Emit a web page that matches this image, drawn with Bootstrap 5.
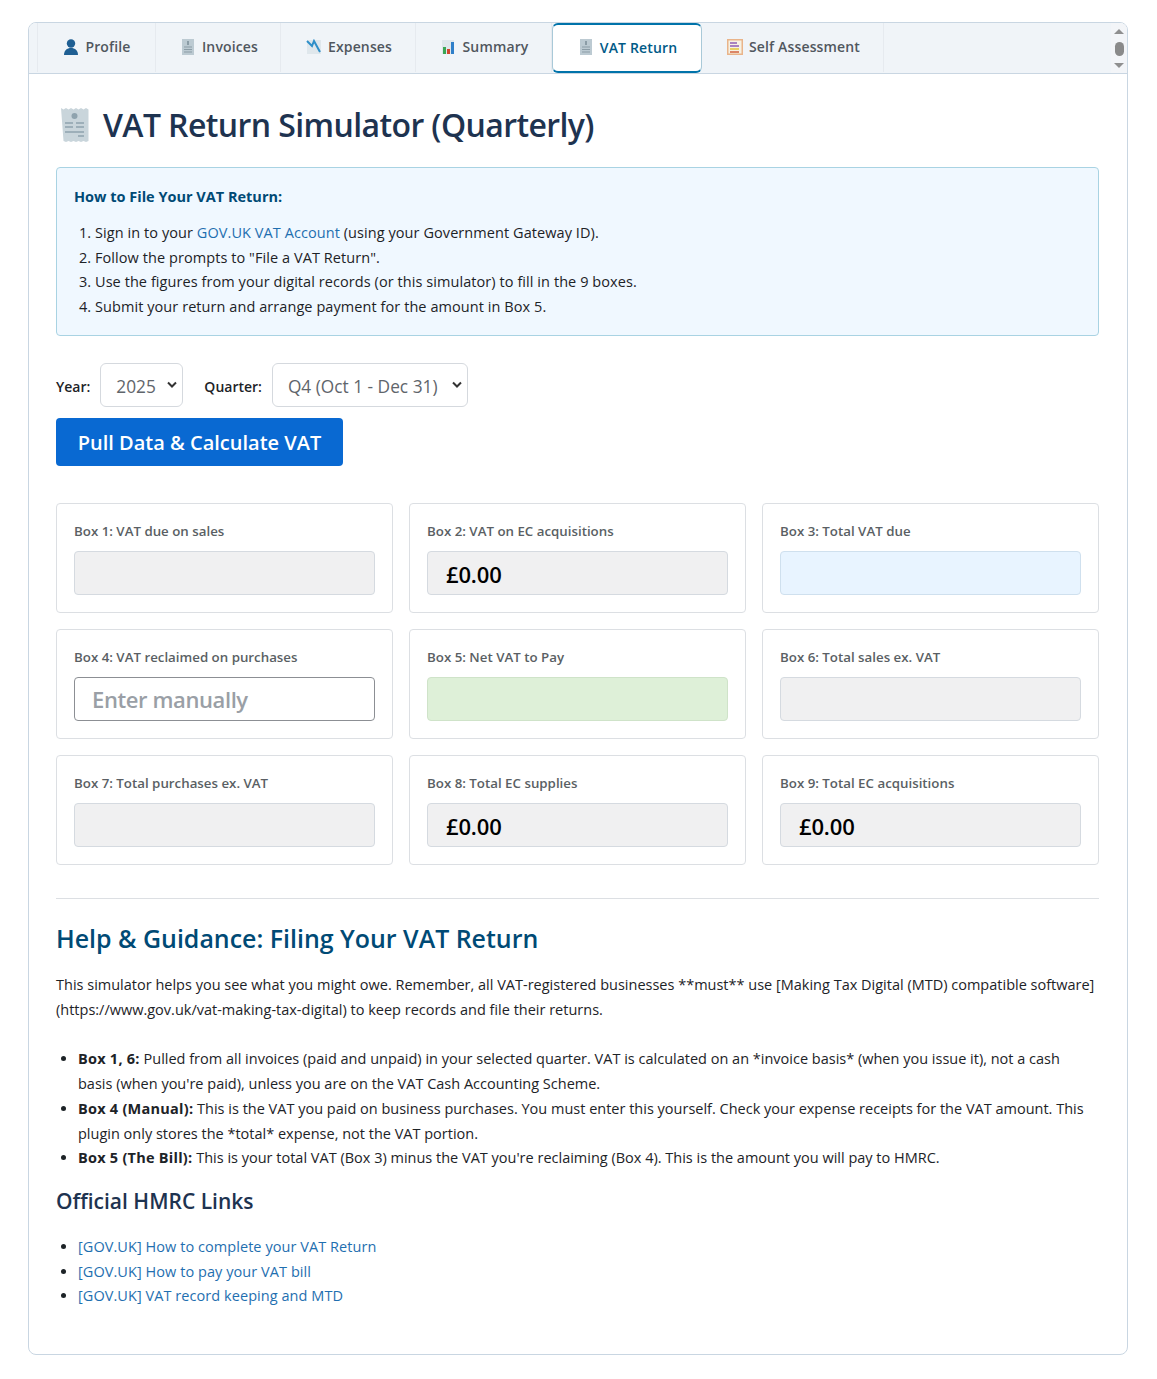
<!DOCTYPE html>
<html lang="en"><head><meta charset="utf-8"><title>VAT Return</title>
<link href="https://cdn.jsdelivr.net/npm/bootstrap@5.3.0/dist/css/bootstrap.min.css" rel="stylesheet">
<style>
body{font-family:"Open Sans","Noto Sans",sans-serif;background:#fff;color:#1d2327;font-size:14.5px;padding:22px 29px 0 28px}
.shell{width:1100px;height:1333px;border:1px solid #c9d6e2;border-radius:8px;overflow:hidden}
.tabbar{height:51px;background:#f0f4f8;border-bottom:1px solid #c9d6e2;padding-left:8px;position:relative}
.tabitem{height:49px;padding:0 0 2px 1px;border-right:1px solid #e6eaef;border-left:1px solid transparent;color:#50575e;font-weight:600;font-size:14px;letter-spacing:.15px;display:flex;align-items:center;justify-content:center;gap:6px;white-space:nowrap}
.tabitem:first-child{border-left-color:#e6eaef}
.tabactive{background:#fff;color:#005a87;border:1px solid #a9c9d8;border-top:2px solid #0073aa;border-bottom:2px solid #0073aa;border-radius:6px;height:50px}
.tabicon{width:16px;height:16px;flex:none}
.scrollctl{position:absolute;right:0;top:0;width:16px;height:50px;display:flex;flex-direction:column;align-items:center;justify-content:space-between;padding:6px 0 5px;background:#f3f5f8}
.scrollthumb{width:9px;height:14px;border-radius:5px;background:#8a8a8a}
.arrowup{border:5px solid transparent;border-top:0;border-bottom:5px solid #8f8f8f}
.arrowdown{border:5px solid transparent;border-bottom:0;border-top:5px solid #8f8f8f}
.mainpane{padding:26px 28px 0 27px}
.pagetitle{font-size:32px;font-weight:600;color:#1e3350;margin:0 0 17px;line-height:50px;display:flex;align-items:center;gap:13px;letter-spacing:-.6px}
.howbox{background:#f0f8ff;border:1px solid #a9d3e3;border-radius:4px;height:169px;padding:17px;margin-bottom:27px}
.howtitle{font-size:14.5px;font-weight:700;color:#004a75;line-height:24px;margin-bottom:12px}
.howbox ol{margin:0;padding-left:21px;line-height:24.7px;letter-spacing:.07px}
.pagelink{color:#1f6fb0;text-decoration:none}
.selbar{height:44px;margin-bottom:11px;gap:10px}
.selbar label{font-weight:600;font-size:14px;color:#1d2327;padding-top:3px}
.selbar .form-select{width:auto;font-size:17.3px;font-weight:400;color:#5f656b;height:44px;padding:3px 26px 0 15px;border-color:#d5d9de;background-image:url("data:image/svg+xml,%3csvg xmlns='http://www.w3.org/2000/svg' viewBox='0 0 10 8'%3e%3cpath fill='none' stroke='%23333' stroke-width='2' d='M1 1.500l4 4 4-4'/%3e%3c/svg%3e");background-position:right 5px center;background-size:10px 8px}
.selbar .quartersel{padding-right:29px}
.secondlabel{margin-left:11px}
.pullbtn{background:#0969d2;border:0;color:#fff;font-size:20px;font-weight:600;width:287px;height:48px;border-radius:4px;padding:2px 0 0}
.boxgrid{margin:37px 0 33px;display:grid;grid-template-columns:repeat(3,337px);gap:16px 16px}
.boxcell{height:110px;border:1px solid #dcdfe3;border-radius:4px;padding:17px}
.boxcell label{display:block;font-size:13.3px;font-weight:600;color:#5a5f64;line-height:21px;margin-bottom:9px}
.boxfield{display:block;width:100%;height:44px;border:1px solid #d5dae0;border-radius:4px;background:#f0f0f1;padding:0 18px;font-size:22px;font-weight:600;color:#000;line-height:45px;letter-spacing:-.15px}
.fieldblue{background:#e8f4ff;border-color:#cfe0ee}
.fieldgreen{background:#def0d8;border-color:#cfe3c9}
.fieldinput{background:#fff;border:1px solid #8c8f94;font-size:22px;font-weight:600;outline:0;letter-spacing:-.4px;padding:1px 18px 0 17px}
.fieldinput::placeholder{color:#9a9fa6;opacity:1}
.splitline{border:0;border-top:1px solid #dcdfe3;opacity:1;margin:0 0 20px}
.helphead{font-size:24.95px;font-weight:600;color:#004a75;line-height:38px;margin:0 0 16px}
.helptext{line-height:24.7px;margin:0 0 25px}
.helplist{padding:0 14px 0 22px;margin:0 0 14px;line-height:24.7px}
.helplist strong{letter-spacing:.25px}
.linkhead{font-size:21px;font-weight:600;color:#1e3350;line-height:32px;margin:0 0 18px}
.linklist{padding-left:22px;margin:0;line-height:24.7px;letter-spacing:.06px}
</style></head><body>
<div class="shell">
<nav class="tabbar d-flex">
<div class="tabitem" style="width:119px"><svg class="tabicon" viewBox="0 0 16 16"><circle cx="8" cy="4.500" r="4.200" fill="#1f5f93"/><path d="M1 16c0-4.500 3-7 7-7s7 2.500 7 7z" fill="#1f5f93"/></svg>Profile</div>
<div class="tabitem" style="width:125px"><svg class="tabicon" viewBox="0 0 16 16"><rect x="2" y="0" width="12" height="16" fill="#bccad2"/><path d="M4 8h8M4 10.500h8M4 13h8" stroke="#8b9ca6"/><rect x="7" y="2" width="2" height="4" fill="#8b9ca6"/></svg>Invoices</div>
<div class="tabitem" style="width:135px"><svg class="tabicon" viewBox="0 0 16 16"><rect x="1" y="1" width="14" height="14" fill="#dfe7ec"/><path d="M1 2l5 5 2-5 6 11" fill="none" stroke="#2f8fc9" stroke-width="2"/></svg>Expenses</div>
<div class="tabitem" style="width:136px"><svg class="tabicon" viewBox="0 0 16 16"><rect x="2" y="1" width="12" height="14" fill="#dfe7ec"/><rect x="3" y="8" width="3" height="7" fill="#3aa655"/><rect x="7" y="10" width="3" height="5" fill="#d2462e"/><rect x="11" y="3" width="3" height="12" fill="#2f7fc9"/></svg>Summary</div>
<div class="tabitem tabactive" style="width:150px"><svg class="tabicon" viewBox="0 0 16 16"><rect x="2" y="0" width="12" height="16" fill="#bccad2"/><path d="M4 8h8M4 10.500h8M4 13h8" stroke="#8b9ca6"/><rect x="7" y="2" width="2" height="4" fill="#8b9ca6"/></svg>VAT Return</div>
<div class="tabitem" style="width:182px"><svg class="tabicon" viewBox="0 0 16 16"><rect x="0" y="0" width="16" height="16" fill="#e9b48a"/><rect x="1.500" y="1.500" width="13" height="13" fill="#f6f1e3"/><path d="M3 4h7M3 7h9" stroke="#8e5fb5" stroke-width="1.400"/><path d="M3 10h9" stroke="#e2c53a" stroke-width="1.400"/><path d="M3 13h9" stroke="#d2603e" stroke-width="1.400"/></svg>Self Assessment</div>
<div class="scrollctl"><span class="arrowup"></span><span class="scrollthumb"></span><span class="arrowdown"></span></div>
</nav>
<main class="mainpane">
<h1 class="pagetitle"><svg width="34" height="36" viewBox="-3 0 34 36"><path d="M2 1l2.500 1.500L7 1l2.500 1.500L12 1l2.500 1.500L17 1l2.500 1.500L22 1l2.500 1.500L27 1l2.500 1.500V34L27 35l-2.500-1-2.500 1-2.500-1-2.500 1-2.500-1-2.500 1-2.500-1-2.500 1-2.500-1z" fill="#c9d5db"/><circle cx="15.500" cy="9" r="3" fill="#8fa3ae"/><path d="M6 16h8M17 16h8M6 20h8M17 20h8M6 25h19M19 29h6" stroke="#8fa3ae" stroke-width="1.500"/></svg>VAT Return Simulator (Quarterly)</h1>
<section class="howbox">
<div class="howtitle">How to File Your VAT Return:</div>
<ol>
<li>Sign in to your <a class="pagelink" href="#">GOV.UK VAT Account</a> (using your Government Gateway ID).</li>
<li>Follow the prompts to "File a VAT Return".</li>
<li>Use the figures from your digital records (or this simulator) to fill in the 9 boxes.</li>
<li>Submit your return and arrange payment for the amount in Box 5.</li>
</ol>
</section>
<div class="selbar d-flex align-items-center">
<label>Year:</label>
<select class="form-select"><option>2025</option></select>
<label class="secondlabel">Quarter:</label>
<select class="form-select quartersel"><option>Q4 (Oct 1 - Dec 31)</option></select>
</div>
<button class="btn pullbtn">Pull Data &amp; Calculate VAT</button>
<div class="boxgrid">
<div class="boxcell"><label>Box 1: VAT due on sales</label><div class="boxfield"></div></div>
<div class="boxcell"><label>Box 2: VAT on EC acquisitions</label><div class="boxfield">£0.00</div></div>
<div class="boxcell"><label>Box 3: Total VAT due</label><div class="boxfield fieldblue"></div></div>
<div class="boxcell"><label>Box 4: VAT reclaimed on purchases</label><input class="boxfield fieldinput" placeholder="Enter manually"></div>
<div class="boxcell"><label>Box 5: Net VAT to Pay</label><div class="boxfield fieldgreen"></div></div>
<div class="boxcell"><label>Box 6: Total sales ex. VAT</label><div class="boxfield"></div></div>
<div class="boxcell"><label>Box 7: Total purchases ex. VAT</label><div class="boxfield"></div></div>
<div class="boxcell"><label>Box 8: Total EC supplies</label><div class="boxfield">£0.00</div></div>
<div class="boxcell"><label>Box 9: Total EC acquisitions</label><div class="boxfield">£0.00</div></div>
</div>
<hr class="splitline">
<h2 class="helphead">Help &amp; Guidance: Filing Your VAT Return</h2>
<p class="helptext">This simulator helps you see what you might owe. Remember, all VAT-registered businesses **must** use [Making Tax Digital (MTD) compatible software](https://www.gov.uk/vat-making-tax-digital) to keep records and file their returns.</p>
<ul class="helplist">
<li><strong>Box 1, 6:</strong> Pulled from all invoices (paid and unpaid) in your selected quarter. VAT is calculated on an *invoice basis* (when you issue it), not a cash basis (when you're paid), unless you are on the VAT Cash Accounting Scheme.</li>
<li><strong>Box 4 (Manual):</strong> This is the VAT you paid on business purchases. You must enter this yourself. Check your expense receipts for the VAT amount. This plugin only stores the *total* expense, not the VAT portion.</li>
<li><strong>Box 5 (The Bill):</strong> This is your total VAT (Box 3) minus the VAT you're reclaiming (Box 4). This is the amount you will pay to HMRC.</li>
</ul>
<h3 class="linkhead">Official HMRC Links</h3>
<ul class="linklist">
<li><a class="pagelink" href="#">[GOV.UK] How to complete your VAT Return</a></li>
<li><a class="pagelink" href="#">[GOV.UK] How to pay your VAT bill</a></li>
<li><a class="pagelink" href="#">[GOV.UK] VAT record keeping and MTD</a></li>
</ul>
</main>
</div>
<script src="https://cdn.jsdelivr.net/npm/bootstrap@5.3.0/dist/js/bootstrap.bundle.min.js"></script>
</body></html>
